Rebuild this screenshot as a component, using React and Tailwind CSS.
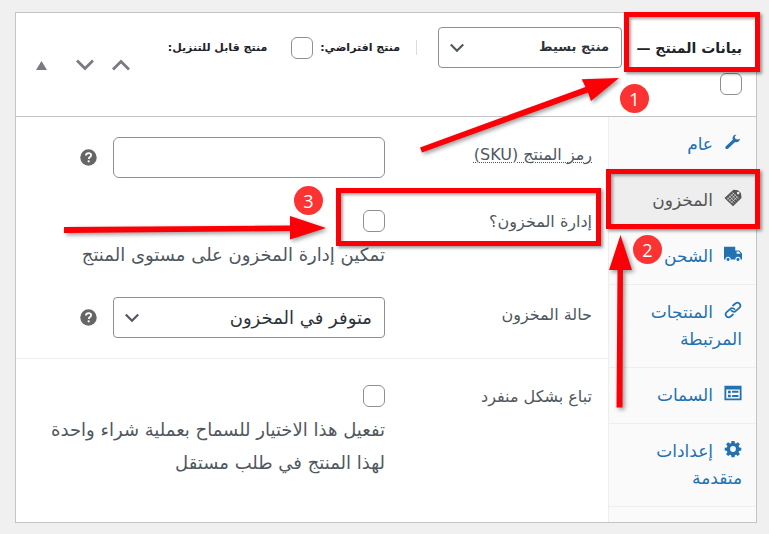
import React, { useState } from 'react';

const WrenchIcon = () => (
    <path d="M17.700 6.300c-.1 1.300-.8 2.600-2 3.300-1 .6-2.300.7-3.400.3l-7.600 7.400c-.8.8-2 .8-2.700.1-.7-.7-.7-1.900.1-2.700l7.700-7.200c-.5-1.200-.4-2.500.3-3.600.8-1.300 2.200-2.100 3.700-2.100l-2 2.700 1.100 2.300 2.600.4z" />
);

const InventoryIcon = () => (
    <>
        <path fillRule="evenodd" d="M10.500.800L.5 10l9.500 9.200 9.500-9.200-.7-5.500-3.300-3.200zM15.800 3a1.500 1.500 0 1 1 0 3 1.500 1.500 0 0 1 0-3z" />
        <path d="M3.500 9.500l7 7M5.500 7.600l7 7M7.500 5.700l7 7M9.500 3.800l7 7M11 4.500l-7.500 7M13 6.500l-7.500 7M15 8.500l-7.500 7" stroke="#eee" strokeWidth=".7" fill="none" />
    </>
);

const TruckIcon = () => (
    <>
        <path d="M0 2h12.500v4H17l3 3.500V16H0z" />
        <path d="M14 7.300h2.500l2 2.500H14z" fill="#fafafa" />
        <circle cx="4.500" cy="16" r="2.300" stroke="#fafafa" strokeWidth="1.200" />
        <circle cx="15.500" cy="16" r="2.300" stroke="#fafafa" strokeWidth="1.200" />
    </>
);

const LinkIcon = () => (
    <g fill="none" stroke="currentColor" strokeWidth="1.900" strokeLinecap="round">
        <path d="M8.200 10.600a3.300 3.300 0 0 0 4.800.6l4-3.600a3.200 3.200 0 0 0-4.400-4.800L10 5" />
        <path d="M11.800 9.400a3.300 3.300 0 0 0-4.800-.6l-4 3.600a3.200 3.200 0 0 0 4.400 4.800L10 15" />
    </g>
);

const AttributesIcon = () => (
    <path fillRule="evenodd" d="M.5 2h19v16H.5zM2.500 6v10h15V6zM4.500 7.500h3v2.700h-3zM9 7.500h7v2.200H9zM4.500 12h3v2.700h-3zM9 12.300h7v2.200H9z" />
);

const GearIcon = () => (
    <path fillRule="evenodd" d="M8.300 1h3.400l.4 2.500 1.300.5 2-1.500 2.300 2.300-1.500 2 .6 1.400 2.400.3v3.300l-2.400.4-.6 1.300 1.500 2-2.300 2.300-2-1.500-1.300.6-.4 2.400H8.300l-.4-2.400-1.300-.6-2 1.500-2.300-2.300 1.500-2-.6-1.300-2.400-.4V8.500l2.400-.3.6-1.400-1.500-2 2.300-2.300 2 1.500 1.300-.5zM10 13.200a3.200 3.200 0 1 0 0-6.400 3.200 3.200 0 0 0 0 6.400z" />
);

const tabs = [
    { id: 'general', label: 'عام', icon: WrenchIcon },
    { id: 'inventory', label: 'المخزون', icon: InventoryIcon },
    { id: 'shipping', label: 'الشحن', icon: TruckIcon },
    { id: 'linked', label: 'المنتجات المرتبطة', icon: LinkIcon },
    { id: 'attributes', label: 'السمات', icon: AttributesIcon },
    { id: 'advanced', label: 'إعدادات متقدمة', icon: GearIcon },
];

const Chevron = ({ className }) => (
    <svg viewBox="0 0 18 12" className={className} fill="none" stroke="currentColor" strokeWidth="2.800">
        <path d="M1 1.500l8 8 8-8" />
    </svg>
);

const Checkbox = ({ id, ...props }) => (
    <input
        id={id}
        type="checkbox"
        className="block size-[22px] shrink-0 appearance-none rounded-md border border-[#8c8f94] bg-white checked:bg-[#2271b1]"
        {...props}
    />
);

const Select = ({ id, label, className, children }) => (
    <div className={`relative ${className}`}>
        <select
            id={id}
            aria-label={label}
            className="block h-[41px] w-full appearance-none rounded border border-[#8c8f94] bg-white pr-3 pl-8 text-[#2c3338]"
        >
            {children}
        </select>
        <Chevron className="pointer-events-none absolute top-4 left-3 h-[10px] w-[14px] text-[#50575e]" />
    </div>
);

const HelpTip = ({ label }) => (
    <button type="button" aria-label={label} className="shrink-0 text-[#666]">
        <svg viewBox="0 0 18 18" className="size-[17px]">
            <circle cx="9" cy="9" r="8.700" fill="currentColor" />
            <path d="M6.300 6.900c.1-1.600 1.200-2.500 2.800-2.500s2.700.9 2.700 2.200c0 1.900-2.500 1.900-2.500 3.900" fill="none" stroke="#fff" strokeWidth="1.900" />
            <circle cx="9.200" cy="13" r="1.200" fill="#fff" />
        </svg>
    </button>
);

const Field = ({ id, label, children }) => (
    <div className="flex items-start">
        <label htmlFor={id} className="w-[207px] shrink-0 pt-1 text-base leading-7">{label}</label>
        <div className="min-w-0 flex-1">{children}</div>
    </div>
);

const CheckboxField = ({ id, label, description }) => (
    <Field id={id} label={label}>
        <div className="pt-[6px]">
            <Checkbox id={id} />
            <p className="pt-[6px] text-lg leading-[33px]">{description}</p>
        </div>
    </Field>
);

const Marker = ({ className, children }) => (
    <span className={`absolute flex size-[29px] items-center justify-center rounded-full bg-[#fb3333] text-lg text-white ${className}`}>
        {children}
    </span>
);

const Highlight = ({ className }) => (
    <div className={`absolute border-5 border-[#fb0007] shadow-[2px_2px_3px_rgba(0,0,0,0.4),inset_2px_2px_3px_rgba(0,0,0,0.35)] ${className}`} />
);

const Annotations = () => (
    <div className="pointer-events-none absolute top-0 right-0 h-[534px] w-[769px] font-['Open_Sans',sans-serif]">
        <Highlight className="top-3 left-[624px] h-[60px] w-[136px]" />
        <Highlight className="top-[169px] left-[606px] h-[60px] w-[154px]" />
        <Highlight className="top-[188px] left-[336px] h-[58px] w-[265px]" />
        <svg viewBox="0 0 769 534" className="absolute inset-0 size-full fill-[#fb0007] drop-shadow-[2px_2px_2px_rgba(0,0,0,0.4)]">
            <path d="M420 147.500L585.500 87l-3.800-7.700L619 78l-28 23-3-8.500L422 152.500z" />
            <path d="M64 227l226-1.500V216l36 12-36 11.500V231L64 233z" />
            <path d="M616.500 407.500l1-137.500H609l11.500-35L632 270h-9l-.5 137.500z" />
        </svg>
        <Marker className="top-[84px] left-[620px]">1</Marker>
        <Marker className="top-[235px] left-[633px]">2</Marker>
        <Marker className="top-[186px] left-[294px]">3</Marker>
    </div>
);

const App = () => {
    const [activeTab, setActiveTab] = useState('inventory');

    return (
        <div dir="rtl" className="relative min-h-screen bg-[#f0f0f1] px-3 pt-3 pb-3 pl-[15px] font-['DejaVu_Sans',sans-serif] text-[#50575e]">
            <div className="border border-[#c3c4c7] bg-white">
                <header className="flex items-center justify-between border-b border-[#c3c4c7] pt-[14px] pr-[14px] pb-[21px] pl-5">
                    <div>
                        <div className="flex items-center text-sm font-bold text-[#1d2327]">
                            <h2 className="w-[120px] whitespace-nowrap">بيانات المنتج —</h2>
                            <Select id="product-type" label="نوع المنتج" className="w-[184px] text-[13px] font-bold">
                                <option>منتج بسيط</option>
                            </Select>
                            <label htmlFor="virtual" className="mr-[21px] border-r border-[#dcdcde] pr-4 text-[11px] whitespace-nowrap">منتج افتراضي:</label>
                            <div className="mr-[7px]"><Checkbox id="virtual" /></div>
                            <label htmlFor="downloadable" className="mr-6 text-[11px] whitespace-nowrap">منتج قابل للتنزيل:</label>
                        </div>
                        <div className="mt-[5px]"><Checkbox id="downloadable" /></div>
                    </div>
                    <div className="flex items-center gap-4 pt-2 text-[#787c82]">
                        <button type="button" aria-label="تحريك لأعلى"><Chevron className="h-3 w-5 rotate-180" /></button>
                        <button type="button" aria-label="تحريك لأسفل"><Chevron className="h-3 w-5" /></button>
                        <button type="button" aria-label="تبديل اللوحة" className="mr-3">
                            <svg viewBox="0 0 11 9" className="h-[9px] w-[11px] fill-current"><path d="M5.500 0L11 9H0z" /></svg>
                        </button>
                    </div>
                </header>

                <div className="flex">
                    <nav className="w-[148px] shrink-0 border-l border-[#eee] bg-[#fafafa]">
                        <ul>
                            {tabs.map(({ id, label, icon: Icon }) => (
                                <li key={id} className="border-b border-[#eee]">
                                    <a
                                        href={`#${id}`}
                                        onClick={() => setActiveTab(id)}
                                        className={`block px-[14px] py-[14px] text-[17px] leading-[27px] ${activeTab === id ? 'bg-[#eee] text-[#555]' : 'text-[#2271b1]'}`}
                                    >
                                        <svg viewBox="0 0 20 20" className="ml-[11px] inline-block size-[18px] fill-current align-[-1px]">
                                            <Icon />
                                        </svg>
                                        {label}
                                    </a>
                                </li>
                            ))}
                        </ul>
                    </nav>

                    <div className="min-w-0 flex-1">
                        <section className="space-y-[26px] border-b border-[#eee] px-4 py-5">
                            <Field id="sku" label={<abbr title="SKU" className="underline decoration-dotted decoration-1 underline-offset-2">رمز المنتج (SKU)</abbr>}>
                                <div className="flex items-center gap-4 pl-12">
                                    <input id="sku" type="text" className="h-[41px] min-w-0 flex-1 rounded-md border border-[#8c8f94] px-3" />
                                    <HelpTip label="رمز المنتج" />
                                </div>
                            </Field>
                            <CheckboxField
                                id="manage-stock"
                                label="إدارة المخزون؟"
                                description="تمكين إدارة المخزون على مستوى المنتج"
                            />
                            <Field id="stock-status" label="حالة المخزون">
                                <div className="flex items-center gap-4 pl-12">
                                    <Select id="stock-status" className="flex-1 text-lg">
                                        <option>متوفر في المخزون</option>
                                    </Select>
                                    <HelpTip label="حالة المخزون" />
                                </div>
                            </Field>
                        </section>
                        <section className="px-4 pt-5 pb-[43px]">
                            <CheckboxField
                                id="sold-individually"
                                label="تباع بشكل منفرد"
                                description="تفعيل هذا الاختيار للسماح بعملية شراء واحدة لهذا المنتج في طلب مستقل"
                            />
                        </section>
                    </div>
                </div>
            </div>
            <Annotations />
        </div>
    );
};

export default App;
